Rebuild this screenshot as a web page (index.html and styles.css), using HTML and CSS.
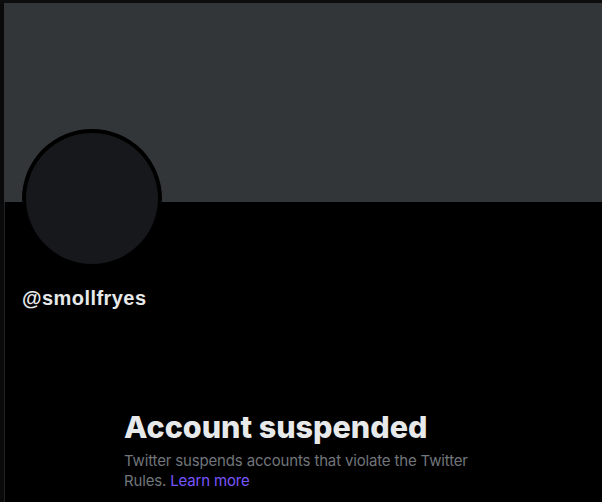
FILE: index.html
```html
<!DOCTYPE html>
<html lang="en">
<head>
<meta charset="utf-8">
<title>@smollfryes</title>
<link rel="stylesheet" href="styles.css">
</head>
<body>
<div class="frame">
  <main class="column">
    <div class="banner"></div>
    <div class="profile">
      <div class="avatar"></div>
      <div class="handle">@smollfryes</div>
    </div>
    <section class="empty">
      <h1 class="empty-title">Account suspended</h1>
      <p class="empty-text">Twitter suspends accounts that violate the Twitter Rules. <a class="link" href="#">Learn more</a></p>
    </section>
  </main>
</div>
</body>
</html>
```
FILE: styles.css
```css
html, body {
  margin: 0;
  padding: 0;
  background: #000;
  height: 100%;
  overflow: hidden;
}
.frame {
  border-top: 3px solid #0d0d0d;
  padding-left: 4px;
  background: #0a0a0a;
  min-height: 100%;
  box-sizing: border-box;
  font-family: "Liberation Sans", Arial, sans-serif;
}
.column {
  background: #000;
  border-left: 1px solid #1f2225;
  min-height: 499px;
}
.banner {
  height: 199px;
  background: #333639;
  margin-left: -1px;
}
.profile {
  padding-left: 17px;
}
.avatar {
  width: 132px;
  height: 131px;
  border: 4px solid #000;
  border-radius: 50%;
  background: #17181c;
  margin-top: -73px;
}
.handle {
  margin-top: 18px;
  font-size: 20px;
  line-height: 24px;
  font-weight: 700;
  color: #e7e9ea;
  letter-spacing: 0.45px;
}
.empty {
  padding-left: 119px;
  margin-top: 99px;
  max-width: 360px;
}
.empty-title {
  margin: 0;
  font-family: Inter, "Liberation Sans", sans-serif;
  font-size: 30.5px;
  line-height: 36px;
  font-weight: 800;
  color: #e7e9ea;
}
.empty-text {
  margin: 6px 0 0;
  font-family: Inter, "Liberation Sans", sans-serif;
  font-size: 15px;
  line-height: 20px;
  letter-spacing: -0.16px;
  color: #71767b;
}
.link {
  color: #7856ff;
  text-decoration: none;
}
```
